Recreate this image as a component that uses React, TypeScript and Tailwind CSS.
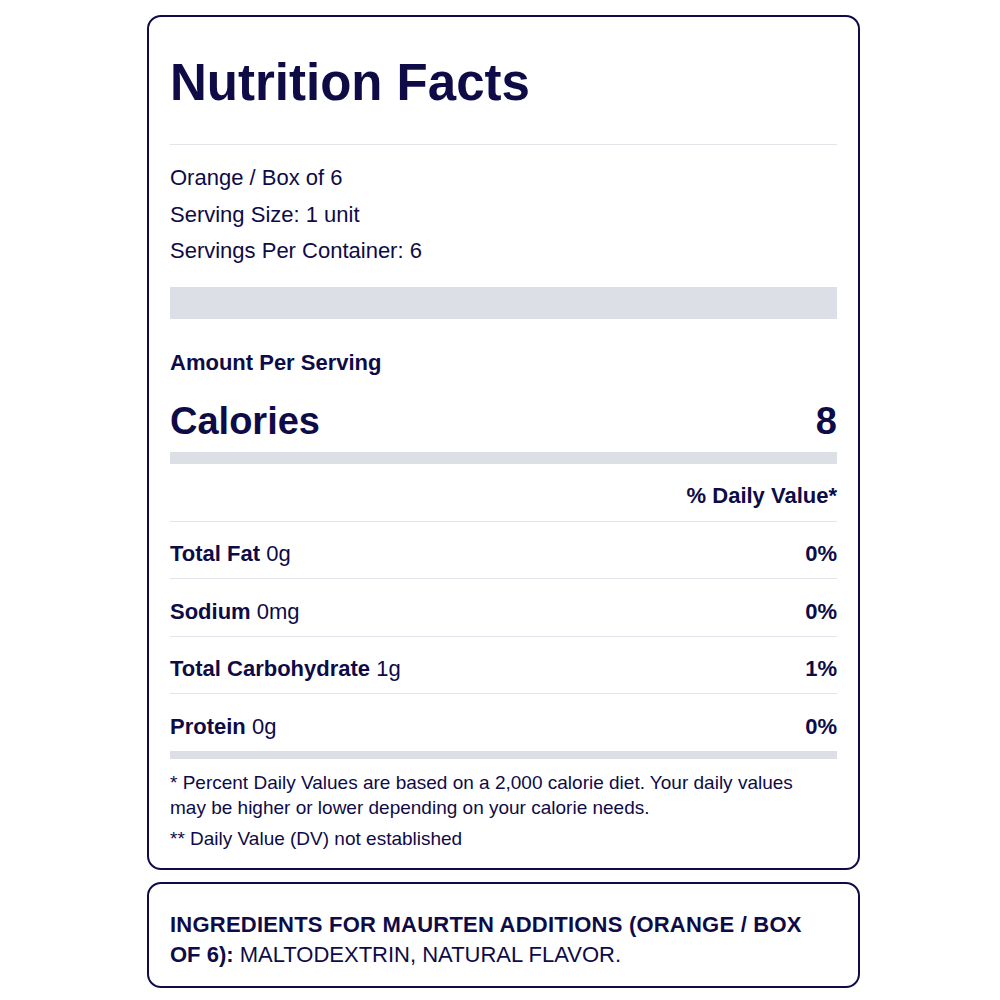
import React from 'react';

const rows = [
  { label: 'Total Fat', amount: '0g', dv: '0%' },
  { label: 'Sodium', amount: '0mg', dv: '0%' },
  { label: 'Total Carbohydrate', amount: '1g', dv: '1%' },
  { label: 'Protein', amount: '0g', dv: '0%' },
];

const App = () => {
  return (
    <div className="min-h-[1000px] bg-white pt-[15px] pl-[147px] font-['Liberation_Sans',Arial,sans-serif] text-[#0e0b47]">
      <div className="w-[713px]">
        {/* nutrition facts card */}
        <div className="rounded-[14px] border-2 border-[#0e0b47] px-[21px] pt-[41px] pb-[17px]">
          <div className="border-b border-[#e2e4ea] pb-[36px]">
            <h1 className="text-[51px] font-bold leading-[50px]">Nutrition Facts</h1>
          </div>

          <div className="pt-[15px] text-[22px] leading-[36.5px]">
            <p>Orange / Box of 6</p>
            <p>Serving Size: 1 unit</p>
            <p>Servings Per Container: 6</p>
          </div>

          <div className="mt-[17px] h-[32px] bg-[#dcdfe6]" />

          <p className="mt-[32px] text-[22px] font-bold leading-[24px]">Amount Per Serving</p>

          <div className="mt-[26px] flex justify-between text-[38px] font-bold leading-[40px]">
            <span>Calories</span>
            <span>8</span>
          </div>

          <div className="mt-[11px] h-[12px] bg-[#dcdfe6]" />

          <div className="flex h-[58px] items-center justify-end border-b border-[#e2e4ea] pt-[8px] text-[22px] font-bold leading-[24px]">
            % Daily Value*
          </div>

          {rows.map((r, i) => {
            const last = i === rows.length - 1;
            return (
              <div
                key={r.label}
                className={
                  last
                    ? 'flex h-[56.5px] items-center justify-between pt-[9px] text-[22px] leading-[24px]'
                    : 'flex h-[57.5px] items-center justify-between border-b border-[#e2e4ea] pt-[9px] text-[22px] leading-[24px]'
                }
              >
                <span>
                  <span className="font-bold">{r.label}</span> {r.amount}
                </span>
                <span className="font-bold">{r.dv}</span>
              </div>
            );
          })}

          <div className="h-[8px] bg-[#dcdfe6]" />

          <p className="mt-[11px] max-w-[650px] text-[19px] leading-[25px]">
            * Percent Daily Values are based on a 2,000 calorie diet. Your daily values may be higher or lower depending on your calorie needs.
          </p>
          <p className="mt-[6px] text-[19px] leading-[25px]">** Daily Value (DV) not established</p>
        </div>

        {/* ingredients card */}
        <div className="mt-[12px] rounded-[14px] border-2 border-[#0e0b47] px-[21px] pt-[26px] pb-[16px] text-[22px] leading-[30px]">
          <p className="font-bold tracking-[0.01em]">INGREDIENTS FOR MAURTEN ADDITIONS (ORANGE / BOX</p>
          <p>
            <span className="font-bold">OF 6):</span> MALTODEXTRIN, NATURAL FLAVOR.
          </p>
        </div>
      </div>
    </div>
  );
};

export default App;
